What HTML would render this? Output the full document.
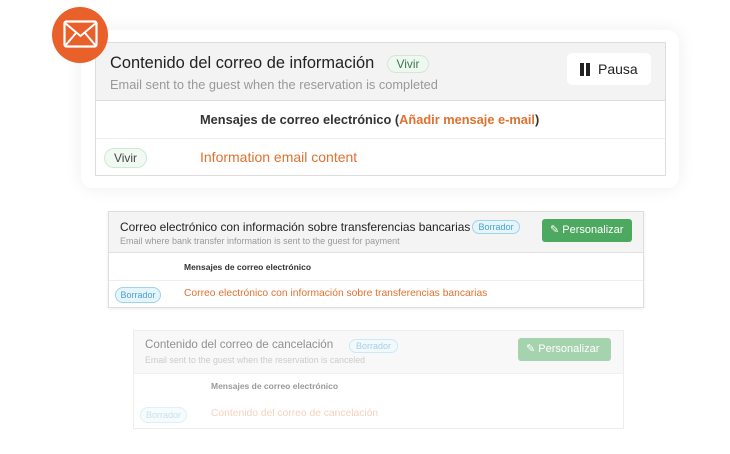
<!DOCTYPE html>
<html><head><meta charset="utf-8"><style>
*{margin:0;padding:0;box-sizing:border-box}
body{width:730px;height:454px;background:#fff;font-family:"Liberation Sans",sans-serif;position:relative;overflow:hidden}
.a{position:absolute;white-space:nowrap}
.pill{position:absolute;border-radius:10px;text-align:center}
</style></head><body>
<div class="a" style="left:81px;top:30px;width:598px;height:158px;background:#fff;border-radius:12px;box-shadow:0 0 18px rgba(0,0,0,0.07)"></div>
<div class="a" style="left:95px;top:42px;width:571px;height:134px;border:1px solid #ddd;background:#fff"></div>
<div class="a" style="left:96px;top:43px;width:569px;height:58px;background:#f3f3f3;border-bottom:1px solid #ddd"></div>
<div class="a" style="left:110px;top:54px;font-size:16.4px;color:#222">Contenido del correo de información</div>
<div class="pill" style="left:387px;top:55px;width:42px;height:18px;border:1px solid #cfe9d5;background:#eef8f0;color:#3b7a4a;font-size:12px;line-height:16px">Vivir</div>
<div class="a" style="left:110px;top:77px;font-size:12.8px;color:#999">Email sent to the guest when the reservation is completed</div>
<div class="a" style="left:567px;top:53px;width:84px;height:32px;background:#fff;border-radius:5px"></div>
<div class="a" style="left:580px;top:63px;width:4px;height:13px;background:#222"></div>
<div class="a" style="left:586px;top:63px;width:4px;height:13px;background:#222"></div>
<div class="a" style="left:598px;top:61px;font-size:14px;color:#222">Pausa</div>
<div class="a" style="left:96px;top:138px;width:569px;height:1px;background:#eee"></div>
<div class="a" style="left:200px;top:112px;font-size:12.8px;font-weight:bold;color:#333">Mensajes de correo electrónico (<span style="color:#e0712f">Añadir mensaje e-mail</span>)</div>
<div class="pill" style="left:104px;top:148px;width:43px;height:20px;border:1px solid #cfe9d5;background:#f1f9f3;color:#444;font-size:12px;line-height:18px">Vivir</div>
<div class="a" style="left:200px;top:149px;font-size:14px;color:#e0712f">Information email content</div>
<div class="a" style="left:52px;top:7px;width:56px;height:56px;border-radius:50%;background:#e9602a"></div>
<svg class="a" style="left:63px;top:20px" width="35" height="28" viewBox="0 0 35 28"><rect x="1.5" y="1.5" width="32" height="25" rx="2" fill="none" stroke="#fff" stroke-width="2.2"/><path d="M2 3 L17.5 16 L33 3 M2 26 L13 13 M33 26 L22 13" fill="none" stroke="#fff" stroke-width="2"/></svg>

<div class="a" style="left:108px;top:211px;width:536px;height:97px;border:1px solid #ddd;background:#fff;box-shadow:0 1px 3px rgba(0,0,0,0.08)"></div>
<div class="a" style="left:109px;top:212px;width:534px;height:41px;background:#f4f4f4;border-bottom:1px solid #e2e2e2"></div>
<div class="a" style="left:120px;top:220px;font-size:11.9px;color:#222">Correo electrónico con información sobre transferencias bancarias</div>
<div class="pill" style="left:472px;top:220px;width:48px;height:14px;border:1px solid #9fd3ee;background:#e6f4fb;color:#4aa3d3;font-size:9px;line-height:12px">Borrador</div>
<div class="a" style="left:120px;top:236px;font-size:9px;color:#999">Email where bank transfer information is sent to the guest for payment</div>
<div class="a" style="left:542px;top:219px;width:90px;height:23px;background:#4ea960;border-radius:3px;color:#fff;font-size:11px;line-height:23px;padding-left:8px">✎ Personalizar</div>
<div class="a" style="left:109px;top:280px;width:534px;height:1px;background:#eee"></div>
<div class="a" style="left:184px;top:262px;font-size:8.5px;font-weight:bold;color:#333">Mensajes de correo electrónico</div>
<div class="pill" style="left:115px;top:287px;width:46px;height:16px;border:1px solid #9fd3ee;background:#e6f4fb;color:#4aa3d3;font-size:9px;line-height:14px">Borrador</div>
<div class="a" style="left:184px;top:288px;font-size:10.3px;color:#e0712f">Correo electrónico con información sobre transferencias bancarias</div>

<div style="position:absolute;left:0;top:0;opacity:0.5">
<div class="a" style="left:133px;top:330px;width:491px;height:99px;border:1px solid #ddd;background:#fff"></div>
<div class="a" style="left:134px;top:331px;width:489px;height:43px;background:#f2f2f2;border-bottom:1px solid #e2e2e2"></div>
<div class="a" style="left:145px;top:338px;font-size:11.6px;color:#222">Contenido del correo de cancelación</div>
<div class="pill" style="left:349px;top:339px;width:49px;height:14px;border:1px solid #9fd3ee;background:#e6f4fb;color:#4aa3d3;font-size:9px;line-height:12px">Borrador</div>
<div class="a" style="left:145px;top:355px;font-size:8.8px;color:#999">Email sent to the guest when the reservation is canceled</div>
<div class="a" style="left:518px;top:338px;width:93px;height:23px;background:#4ea960;border-radius:3px;color:#fff;font-size:11px;line-height:23px;padding-left:8px">✎ Personalizar</div>
<div class="a" style="left:211px;top:381px;font-size:8.5px;font-weight:bold;color:#333">Mensajes de correo electrónico</div>
<div class="pill" style="left:140px;top:407px;width:47px;height:16px;border:1px solid #bfe3f3;background:#eef8fc;color:#8cc6e3;font-size:9px;line-height:14px">Borrador</div>
<div class="a" style="left:211px;top:408px;font-size:10.3px;color:#f0a57a">Contenido del correo de cancelación</div>
</div>
</body></html>
